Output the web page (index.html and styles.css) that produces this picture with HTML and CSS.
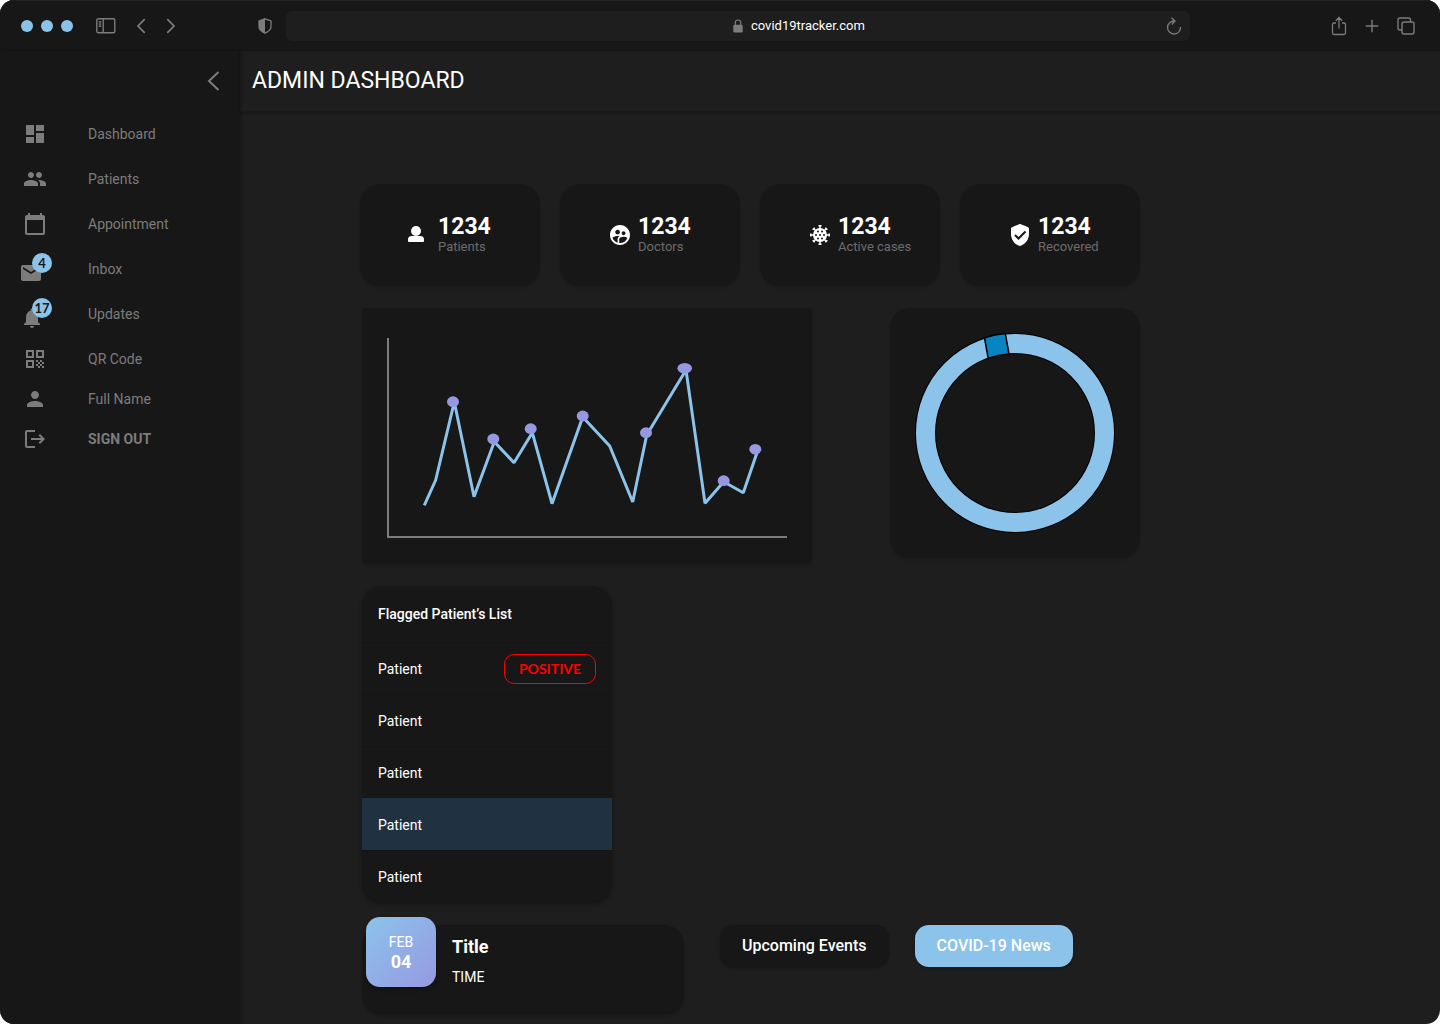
FILE: index.html
```html
<!DOCTYPE html>
<html lang="en">
<head>
<meta charset="utf-8">
<meta name="viewport" content="width=device-width, initial-scale=1">
<title>Admin Dashboard</title>
<link rel="stylesheet" href="styles.css">
</head>
<body>
<div class="window">
  <header class="toolbar">
    <div class="toolbar-left">
      <div class="lights"><span class="light"></span><span class="light"></span><span class="light"></span></div>
      <button class="tool" aria-label="Toggle sidebar"><svg width="20" height="16" viewBox="0 0 20 16" fill="none" stroke="currentColor" stroke-width="1.4"><rect x=".8" y=".8" width="18" height="14" rx="1.5"/><path d="M7.2 1v14M2.8 3.8h2.4M2.8 6h2.4M2.8 8.2h2.4"/></svg></button>
      <div class="history">
        <button class="tool" aria-label="Back"><svg width="10" height="16" viewBox="0 0 10 16" fill="none" stroke="currentColor" stroke-width="1.7"><path d="M8.7 1.2 2 8l6.7 6.8"/></svg></button>
        <button class="tool" aria-label="Forward"><svg width="10" height="16" viewBox="0 0 10 16" fill="none" stroke="currentColor" stroke-width="1.7"><path d="M1.3 1.2 8 8l-6.7 6.8"/></svg></button>
      </div>
      <button class="tool privacy" aria-label="Privacy report"><svg width="14" height="16" viewBox="0 0 14 16"><path d="M7 .8 13 3v5.5c0 3-2.5 5.2-6 6.7-3.5-1.5-6-3.7-6-6.7V3z" fill="none" stroke="currentColor" stroke-width="1.3"/><path d="M7 .8 1 3v5.5c0 3 2.5 5.2 6 6.7z" fill="currentColor"/></svg></button>
    </div>
    <form class="address">
      <label class="address-field" for="url"><svg width="10" height="14" viewBox="0 0 10 14" aria-label="Secure"><rect x=".3" y="5.8" width="9.4" height="7.7" rx="1.2" fill="currentColor"/><path d="M2.3 6V3.7a2.7 2.7 0 0 1 5.4 0V6" fill="none" stroke="currentColor" stroke-width="1.2"/></svg></label>
      <input class="address-input" id="url" type="text" value="covid19tracker.com">
      <button class="tool" type="button" aria-label="Reload"><svg width="16" height="18" viewBox="0 0 16 18" fill="none" stroke="currentColor" stroke-width="1.3"><path d="M8.5 4A6.500 6.500 0 1 0 14.500 10M5.500.8 9 4 5.800 7.500"/></svg></button>
    </form>
    <div class="toolbar-right">
      <button class="tool" aria-label="Share"><svg width="16" height="20" viewBox="0 0 16 20" fill="none" stroke="currentColor" stroke-width="1.3"><path d="M5 7H3a1.500 1.500 0 0 0-1.500 1.500v8.500A1.500 1.500 0 0 0 3 18.500h10a1.500 1.500 0 0 0 1.500-1.500V8.500A1.500 1.500 0 0 0 13 7h-2M8 12.500V1.800M4.800 4.700 8 1.500l3.200 3.200"/></svg></button>
      <button class="tool" aria-label="New tab"><svg width="14" height="14" viewBox="0 0 14 14" fill="none" stroke="currentColor" stroke-width="1.4"><path d="M7 .7v12.600M.7 7h12.600"/></svg></button>
      <button class="tool" aria-label="Show tabs"><svg width="18" height="18" viewBox="1 1 18 18" fill="none" stroke="currentColor" stroke-width="1.4"><rect x="6" y="6" width="12" height="12" rx="2"/><path d="M6 14H4a2 2 0 0 1-2-2V4a2 2 0 0 1 2-2h8.500a2 2 0 0 1 2 2v2"/></svg></button>
    </div>
  </header>

  <div class="app">
    <aside class="sidebar">
      <button class="tool collapse" aria-label="Collapse menu"><svg width="14" height="20" viewBox="0 0 14 20" fill="none" stroke="currentColor" stroke-width="2"><path d="M12.500 1 3 10l9.500 9"/></svg></button>
      <nav>
        <ul class="nav nav-spaced">
          <li><a class="nav-link" href="#"><span class="nav-icon"><svg width="24" height="24" viewBox="0 0 24 24"><path d="M3 13h8V3H3zm0 8h8v-6H3zm10 0h8V11h-8zm0-18v6h8V3z"/></svg></span>Dashboard</a></li>
          <li><a class="nav-link" href="#"><span class="nav-icon"><svg width="24" height="24" viewBox="0 0 24 24"><path d="M16 11c1.660 0 2.990-1.340 2.990-3S17.660 5 16 5c-1.660 0-3 1.340-3 3s1.340 3 3 3zm-8 0c1.660 0 2.990-1.340 2.990-3S9.660 5 8 5C6.340 5 5 6.340 5 8s1.340 3 3 3zm0 2c-2.330 0-7 1.170-7 3.500V19h14v-2.500c0-2.330-4.670-3.500-7-3.500zm8 0c-.29 0-.62.02-.97.05 1.160.84 1.970 1.970 1.970 3.450V19h6v-2.500c0-2.330-4.670-3.500-7-3.500z"/></svg></span>Patients</a></li>
          <li><a class="nav-link" href="#"><span class="nav-icon"><svg width="24" height="24" viewBox="0 0 24 24"><path d="M20 3h-1V1h-2v2H7V1H5v2H4c-1.100 0-2 .9-2 2v16c0 1.100.9 2 2 2h16c1.100 0 2-.9 2-2V5c0-1.100-.9-2-2-2zm0 18H4V8h16v13z"/></svg></span>Appointment</a></li>
          <li><a class="nav-link" href="#"><span class="nav-icon"><svg width="40" height="32" viewBox="-4 -8 40 32"><path d="M20 4H4c-1.100 0-2 .9-2 2v12c0 1.100.9 2 2 2h16c1.100 0 2-.9 2-2V6c0-1.100-.9-2-2-2zm0 4-8 5-8-5V6l8 5 8-5z"/></svg><span class="badge">4</span></span>Inbox</a></li>
          <li><a class="nav-link" href="#"><span class="nav-icon"><svg width="40" height="32" viewBox="-5 -8 40 32"><path d="M12 22c1.100 0 2-.9 2-2h-4c0 1.100.89 2 2 2zm6-6v-5c0-3.070-1.640-5.640-4.500-6.320V4c0-.83-.67-1.500-1.500-1.500s-1.500.67-1.500 1.500v.68C7.630 5.360 6 7.920 6 11v5l-2 2v1h16v-1z"/></svg><span class="badge">17</span></span>Updates</a></li>
          <li><a class="nav-link" href="#"><span class="nav-icon"><svg width="24" height="24" viewBox="0 0 24 24"><path fill-rule="evenodd" d="M3 11h8V3H3zm2-6h4v4H5zM3 21h8v-8H3zm2-6h4v4H5zM13 3v8h8V3zm6 6h-4V5h4zM19 19h2v2h-2zM13 13h2v2h-2zM15 15h2v2h-2zM13 17h2v2h-2zM15 19h2v2h-2zM17 17h2v2h-2zM17 13h2v2h-2zM19 15h2v2h-2z"/></svg></span>QR Code</a></li>
        </ul>
        <ul class="nav">
          <li><a class="nav-link" href="#"><span class="nav-icon"><svg width="24" height="24" viewBox="0 0 24 24"><path d="M12 12c2.210 0 4-1.790 4-4s-1.790-4-4-4-4 1.790-4 4 1.790 4 4 4zm0 2c-2.670 0-8 1.340-8 4v2h16v-2c0-2.660-5.330-4-8-4z"/></svg></span>Full Name</a></li>
          <li><a class="nav-link nav-strong" href="#"><span class="nav-icon"><svg width="24" height="24" viewBox="0 0 24 24"><path d="M12 3v2H4v14h8v2H4a2 2 0 0 1-2-2V5a2 2 0 0 1 2-2zM8 11h10.200l-2.600-2.600L17 7l5 5-5 5-1.400-1.400 2.600-2.600H8z"/></svg></span>SIGN OUT</a></li>
        </ul>
      </nav>
    </aside>

    <main class="main">
      <div class="page-head"><h1 class="page-title">ADMIN DASHBOARD</h1></div>
      <div class="content">
        <section class="stats" aria-label="Totals">
          <article class="card stat"><svg width="24" height="24" viewBox="0 0 24 24"><circle cx="8" cy="8" r="5"/><path d="M0 16.500C0 14 1.500 13 4 13h8c2.500 0 4 1 4 3.500V18a1 1 0 0 1-1 1H1a1 1 0 0 1-1-1z"/></svg><div><strong class="stat-value">1234</strong><span class="stat-label">Patients</span></div></article>
          <article class="card stat"><svg width="24" height="24" viewBox="0 0 24 24"><path d="M11.990 2c-5.520 0-10 4.480-10 10s4.480 10 10 10 10-4.480 10-10-4.480-10-10-10zm3.610 6.340c1.070 0 1.930.86 1.930 1.930 0 1.070-.86 1.930-1.930 1.930-1.070 0-1.930-.86-1.930-1.930-.01-1.070.86-1.930 1.930-1.930zm-6-1.580c1.300 0 2.360 1.060 2.360 2.360 0 1.300-1.060 2.360-2.360 2.360s-2.360-1.060-2.360-2.360c0-1.310 1.050-2.360 2.360-2.360zm0 9.130v3.750c-2.400-.75-4.300-2.600-5.140-4.960 1.050-1.120 3.670-1.690 5.140-1.690.53 0 1.200.08 1.900.22-1.640.87-1.900 2.020-1.900 2.680zM11.990 20c-.27 0-.53-.01-.79-.04v-4.070c0-1.420 2.940-2.130 4.400-2.130 1.070 0 2.920.39 3.840 1.150-1.170 2.970-4.060 5.090-7.450 5.090z"/></svg><div><strong class="stat-value">1234</strong><span class="stat-label">Doctors</span></div></article>
          <article class="card stat"><svg width="24" height="24" viewBox="0 0 24 24"><g stroke="#fff" stroke-width="1.5"><path d="M12 3v18M3 12h18M5.800 5.800l12.400 12.400M18.200 5.800 5.800 18.200"/><path d="M10.500 2.800h3M10.500 21.200h3M2.800 10.500v3M21.200 10.500v3M4.700 6.700l2-2M17.300 4.700l2 2M4.700 17.300l2 2M17.300 19.300l2-2"/></g><circle cx="12" cy="12" r="7"/><g fill="#171717"><circle cx="10" cy="8.600" r="1"/><circle cx="14" cy="8.600" r="1"/><circle cx="8" cy="12" r="1"/><circle cx="12" cy="12" r="1"/><circle cx="16" cy="12" r="1"/><circle cx="10" cy="15.400" r="1"/><circle cx="14" cy="15.400" r="1"/></g></svg><div><strong class="stat-value">1234</strong><span class="stat-label">Active cases</span></div></article>
          <article class="card stat"><svg width="24" height="24" viewBox="0 0 24 24"><path d="M12 1c.5 0 7.500 2.800 8 3.200.7.400 1 .8 1 1.800v5c0 5.550-3.840 10.740-9 12-5.160-1.260-9-6.450-9-12V6c0-1 .3-1.400 1-1.800C4.500 3.800 11.500 1 12 1z"/><path d="m7 12 3.500 3.500L17.500 8.500" fill="none" stroke="#171717" stroke-width="2"/></svg><div><strong class="stat-value">1234</strong><span class="stat-label">Recovered</span></div></article>
        </section>

        <div class="details">
          <section class="charts">
            <figure class="card line-card">
              <svg class="graphic" viewBox="0 0 400 200" role="img" aria-label="Cases over time">
                <path d="M1 0v199h399" fill="none" stroke="#7c7c7c" stroke-width="2"/>
                <path d="M37.300 167.300 48.700 142l18.600-78L87 158.700l20.300-55L127 124.700l18.300-30 19.700 71L195.700 79l27 29 23 56 14-67L299 32l19 133.300 18.700-21.600 19.600 11 14-41" fill="none" stroke="#8cc3ea" stroke-width="3" stroke-linejoin="bevel"/>
                <g fill="#9699e2"><ellipse cx="66" cy="63.700" rx="6" ry="5.400"/><ellipse cx="106.300" cy="101" rx="6" ry="5.400"/><ellipse cx="143.700" cy="90.700" rx="6" ry="5.400"/><ellipse cx="195.700" cy="78" rx="6" ry="5.400"/><ellipse cx="259" cy="94.700" rx="6" ry="5.400"/><ellipse cx="297.700" cy="30.300" rx="7.300" ry="5.400"/><ellipse cx="336.700" cy="142.700" rx="6" ry="5.400"/><ellipse cx="368.300" cy="111.300" rx="6" ry="5.400"/></g>
              </svg>
            </figure>
            <figure class="card donut-card">
              <svg class="graphic" viewBox="0 0 250 250" role="img" aria-label="Share of active cases">
                <circle cx="125" cy="125" r="89.500" fill="none" stroke="#000" stroke-width="21"/>
                <circle cx="125" cy="125" r="89.500" fill="none" stroke="#8cc3ea" stroke-width="19"/>
                <path d="M94.500 29.800Q104.500 26.500 115.300 25.500L119 46Q108 47 98.200 50.300z" fill="#0784c1" stroke="#000" stroke-width="1.6"/>
              </svg>
            </figure>
          </section>

          <section class="card patients">
            <h2 class="patients-title">Flagged Patient’s List</h2>
            <ul class="patients-list">
              <li class="patient">Patient <button class="status">POSITIVE</button></li>
              <li class="patient">Patient</li>
              <li class="patient">Patient</li>
              <li class="patient patient-active">Patient</li>
              <li class="patient">Patient</li>
            </ul>
          </section>

          <section class="events">
            <article class="card event">
              <time class="event-date" datetime="02-04"><span class="event-month">FEB</span><strong class="event-day">04</strong></time>
              <h3 class="event-title">Title</h3>
              <p class="event-time">TIME</p>
            </article>
            <div class="actions">
              <button class="action">Upcoming Events</button>
              <button class="action action-primary">COVID-19 News</button>
            </div>
          </section>
        </div>
      </div>
    </main>
  </div>
</div>
</body>
</html>
```
FILE: styles.css
```css
:root {
  --page: #1e1e1e;
  --surface: #171717;
  --muted: #7c7c7c;
  --blue: #8cc3ea;
  --violet: #9699e2;
}

* { box-sizing: border-box; }

body {
  margin: 0;
  background: #fff;
  color: #fff;
  font-family: Roboto, "Liberation Sans", sans-serif;
  font-size: 14px;
  line-height: 20px;
}

h1, h2, h3, p, ul, figure { margin: 0; padding: 0; }
ul { list-style: none; }
svg { display: block; }
button, input { font: inherit; color: inherit; }

.window {
  display: flex;
  flex-direction: column;
  min-height: 100vh;
  overflow: hidden;
  border-radius: 14px;
  background: var(--page);
}

/* Browser toolbar */
.toolbar {
  display: flex;
  align-items: center;
  height: 51px;
  border-top: 1px solid #232323;
  background: var(--surface);
  color: var(--muted);
}

.toolbar-left {
  display: flex;
  flex: none;
  align-items: center;
  width: 286px;
  padding: 0 14px 0 21px;
}

.lights { display: flex; gap: 8px; margin-right: 23px; }
.light { width: 12px; height: 12px; border-radius: 50%; background: var(--blue); }
.history { display: flex; gap: 20px; margin-left: 20px; }

.tool {
  flex: none;
  padding: 0;
  border: 0;
  background: none;
  color: var(--muted);
}

.privacy { margin-left: auto; }

.address {
  display: flex;
  flex: 1;
  align-items: center;
  justify-content: center;
  gap: 8px;
  height: 30px;
  padding: 0 8px 0 160px;
  border-radius: 6px;
  background: var(--page);
}

.address-field { margin-left: auto; }

.address-input {
  width: 120px;
  margin-right: auto;
  padding: 0;
  border: 0;
  outline: 0;
  background: none;
  color: #fff;
  font-size: 13px;
}

.toolbar-right {
  display: flex;
  flex: none;
  align-items: center;
  justify-content: flex-end;
  gap: 18px;
  width: 250px;
  padding-right: 25px;
}

/* Application frame */
.app { display: flex; flex: 1; }

.sidebar {
  flex: none;
  width: 240px;
  padding: 20px 20px 0 15px;
  background: var(--surface);
  box-shadow: 1px 0 3px rgba(0, 0, 0, .3);
}

.collapse { display: block; margin: 0 0 23px auto; }

.nav { display: grid; }
.nav-spaced { gap: 5px; }

.nav-link {
  display: flex;
  align-items: center;
  gap: 33px;
  height: 40px;
  color: var(--muted);
  text-decoration: none;
}

.nav-strong { font-weight: 700; }

.nav-icon {
  position: relative;
  display: grid;
  place-items: center;
  width: 40px;
  height: 32px;
  fill: currentColor;
}

.badge {
  position: absolute;
  top: 0;
  right: 3px;
  width: 20px;
  height: 20px;
  border-radius: 50%;
  background: var(--blue);
  color: #171717;
  font-family: Lato, sans-serif;
  font-size: 13px;
  font-weight: 700;
  line-height: 20px;
  text-align: center;
}

.main { flex: 1; min-width: 0; }

.page-head {
  padding: 14px 12px;
  border-bottom: 1px solid #191919;
  box-shadow: 0 1px 3px rgba(0, 0, 0, .3);
}

.page-title { font-size: 23px; font-weight: 400; line-height: 32px; }

.content { padding: 72px 25% 8px 10%; }

.card {
  border-radius: 20px;
  background: var(--surface);
  box-shadow: 0 2px 3px rgba(0, 0, 0, .15);
}

/* Totals */
.stats {
  display: grid;
  grid-template-columns: repeat(4, 1fr);
  gap: 20px;
  margin-bottom: 22px;
}

.stat {
  display: flex;
  align-items: center;
  gap: 6px;
  height: 102px;
  padding-left: 48px;
}

.stat svg { flex: none; fill: #fff; }
.stat-value { display: block; font-size: 23px; font-weight: 700; line-height: 24px; }
.stat-label { display: block; color: #6c6c6c; font-size: 13px; line-height: 16px; }

.details { display: grid; gap: 23px; padding-left: 2px; }

.charts {
  display: grid;
  grid-template-columns: 450fr 250fr;
  align-items: start;
  gap: 78px;
}

.graphic { width: 100%; height: auto; }
.line-card { padding: 30px 25px; border-radius: 4px; padding-bottom: 25px; }

/* Flagged patients */
.patients { width: 250px; overflow: hidden; box-shadow: 0 2px 4px rgba(0, 0, 0, .35); }
.patients-title { padding: 18px 16px; font-size: 14px; font-weight: 500; line-height: 20px; }

.patient {
  display: flex;
  align-items: center;
  justify-content: space-between;
  height: 52px;
  padding: 0 16px;
  border-top: 1px solid #141414;
}

.patient-active { border-color: #203241; background: #203241; }

.status {
  width: 92px;
  height: 30px;
  padding: 0;
  border: 1px solid #f00;
  border-radius: 10px;
  background: none;
  color: #f00;
  font-family: Lato, sans-serif;
  font-weight: 700;
}

/* Events */
.events { display: flex; align-items: flex-start; gap: 36px; }

.event {
  position: relative;
  flex: 0 1 322px;
  padding: 10px 16px 28px 90px;
}

.event-date {
  position: absolute;
  top: -8px;
  left: 4px;
  display: grid;
  align-content: center;
  width: 70px;
  height: 70px;
  border-radius: 14px;
  background: linear-gradient(135deg, var(--blue), var(--violet));
  box-shadow: 0 2px 4px rgba(0, 0, 0, .3);
  text-align: center;
}

.event-day { font-size: 18px; }
.event-title { font-size: 18px; font-weight: 700; line-height: 24px; }
.event-time { margin-top: 8px; }

.actions { display: flex; flex: none; gap: 26px; }

.action {
  height: 42px;
  padding: 0 22px;
  border: 0;
  border-radius: 14px;
  background: var(--surface);
  box-shadow: 0 1px 3px rgba(0, 0, 0, .3);
  font-size: 16px;
  font-weight: 500;
  white-space: nowrap;
}

.action-primary { background: var(--blue); }
```
